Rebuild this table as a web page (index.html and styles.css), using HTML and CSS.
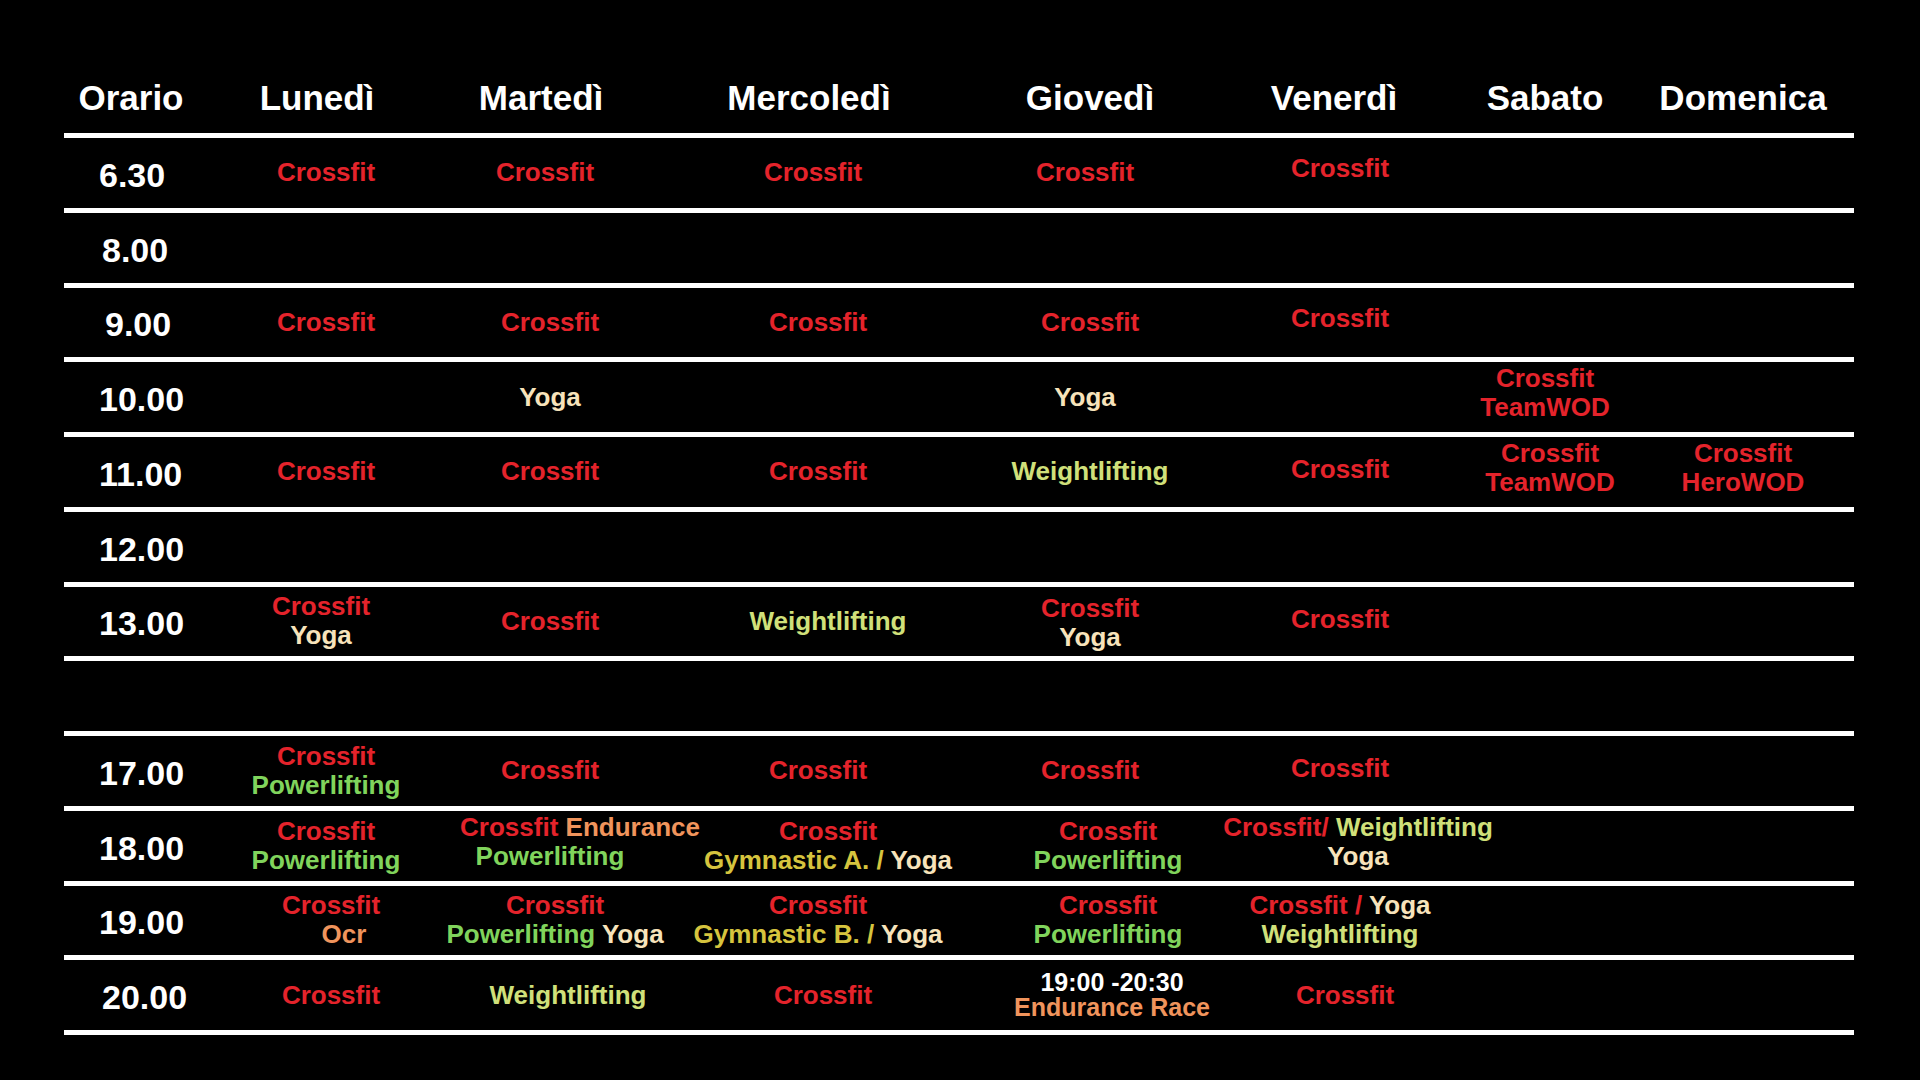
FILE: index.html
```html
<!DOCTYPE html>
<html lang="it">
<head>
<meta charset="utf-8">
<title>Orario</title>
<link rel="stylesheet" href="styles.css">
</head>
<body>
<div class="schedule">
  <div class="row head">
    <div class="cell h-time"><div class="ln">Orario</div></div>
    <div class="cell h-left"><div class="ln">Lunedì</div></div>
    <div class="cell h-left"><div class="ln">Martedì</div></div>
    <div class="cell h-left"><div class="ln">Mercoledì</div></div>
    <div class="cell"><div class="ln">Giovedì</div></div>
    <div class="cell h-left-s"><div class="ln">Venerdì</div></div>
    <div class="cell"><div class="ln">Sabato</div></div>
    <div class="cell"><div class="ln">Domenica</div></div>
  </div>

  <div class="row">
    <div class="cell time"><div class="ln">6.30</div></div>
    <div class="cell"><div class="ln cf">Crossfit</div></div>
    <div class="cell nudge-l"><div class="ln cf">Crossfit</div></div>
    <div class="cell nudge-l"><div class="ln cf">Crossfit</div></div>
    <div class="cell nudge-l"><div class="ln cf">Crossfit</div></div>
    <div class="cell hi"><div class="ln cf">Crossfit</div></div>
    <div class="cell"></div>
    <div class="cell"></div>
  </div>

  <div class="row">
    <div class="cell time t-in"><div class="ln">8.00</div></div>
    <div class="cell"></div><div class="cell"></div><div class="cell"></div>
    <div class="cell"></div><div class="cell"></div><div class="cell"></div><div class="cell"></div>
  </div>

  <div class="row">
    <div class="cell time t-in2"><div class="ln">9.00</div></div>
    <div class="cell"><div class="ln cf">Crossfit</div></div>
    <div class="cell"><div class="ln cf">Crossfit</div></div>
    <div class="cell"><div class="ln cf">Crossfit</div></div>
    <div class="cell"><div class="ln cf">Crossfit</div></div>
    <div class="cell hi"><div class="ln cf">Crossfit</div></div>
    <div class="cell"></div>
    <div class="cell"></div>
  </div>

  <div class="row">
    <div class="cell time"><div class="ln">10.00</div></div>
    <div class="cell"></div>
    <div class="cell"><div class="ln yo">Yoga</div></div>
    <div class="cell"></div>
    <div class="cell nudge-l"><div class="ln yo">Yoga</div></div>
    <div class="cell"></div>
    <div class="cell hi"><div class="ln cf">Crossfit</div><div class="ln cf">TeamWOD</div></div>
    <div class="cell"></div>
  </div>

  <div class="row">
    <div class="cell time"><div class="ln">11.00</div></div>
    <div class="cell"><div class="ln cf">Crossfit</div></div>
    <div class="cell"><div class="ln cf">Crossfit</div></div>
    <div class="cell"><div class="ln cf">Crossfit</div></div>
    <div class="cell"><div class="ln wl">Weightlifting</div></div>
    <div class="cell hi-s"><div class="ln cf">Crossfit</div></div>
    <div class="cell nudge-s hi"><div class="ln cf">Crossfit</div><div class="ln cf">TeamWOD</div></div>
    <div class="cell hi"><div class="ln cf">Crossfit</div><div class="ln cf">HeroWOD</div></div>
  </div>

  <div class="row">
    <div class="cell time"><div class="ln">12.00</div></div>
    <div class="cell"></div><div class="cell"></div><div class="cell"></div>
    <div class="cell"></div><div class="cell"></div><div class="cell"></div><div class="cell"></div>
  </div>

  <div class="row">
    <div class="cell time"><div class="ln">13.00</div></div>
    <div class="cell nudge-l"><div class="ln cf">Crossfit</div><div class="ln yo">Yoga</div></div>
    <div class="cell"><div class="ln cf">Crossfit</div></div>
    <div class="cell nudge-m"><div class="ln wl">Weightlifting</div></div>
    <div class="cell lo"><div class="ln cf">Crossfit</div><div class="ln yo">Yoga</div></div>
    <div class="cell hi-s"><div class="ln cf">Crossfit</div></div>
    <div class="cell"></div>
    <div class="cell"></div>
  </div>

  <div class="row gap">
    <div class="cell time"></div>
    <div class="cell"></div><div class="cell"></div><div class="cell"></div>
    <div class="cell"></div><div class="cell"></div><div class="cell"></div><div class="cell"></div>
  </div>

  <div class="row">
    <div class="cell time"><div class="ln">17.00</div></div>
    <div class="cell"><div class="ln cf">Crossfit</div><div class="ln pl">Powerlifting</div></div>
    <div class="cell"><div class="ln cf">Crossfit</div></div>
    <div class="cell"><div class="ln cf">Crossfit</div></div>
    <div class="cell"><div class="ln cf">Crossfit</div></div>
    <div class="cell hi-s"><div class="ln cf">Crossfit</div></div>
    <div class="cell"></div>
    <div class="cell"></div>
  </div>

  <div class="row">
    <div class="cell time"><div class="ln">18.00</div></div>
    <div class="cell"><div class="ln cf">Crossfit</div><div class="ln pl">Powerlifting</div></div>
    <div class="cell hi"><div class="ln shift-30"><span class="cf">Crossfit</span> <span class="en">Endurance</span></div><div class="ln pl">Powerlifting</div></div>
    <div class="cell nudge-m"><div class="ln cf">Crossfit</div><div class="ln"><span class="gy">Gymnastic A. /</span> <span class="yo">Yoga</span></div></div>
    <div class="cell nudge-x"><div class="ln cf">Crossfit</div><div class="ln pl">Powerlifting</div></div>
    <div class="cell nudge-x hi"><div class="ln"><span class="cf">Crossfit/</span> <span class="wl">Weightlifting</span></div><div class="ln yo">Yoga</div></div>
    <div class="cell"></div>
    <div class="cell"></div>
  </div>

  <div class="row">
    <div class="cell time"><div class="ln">19.00</div></div>
    <div class="cell nudge-s"><div class="ln cf">Crossfit</div><div class="ln en shift-20">Ocr</div></div>
    <div class="cell nudge-s"><div class="ln cf">Crossfit</div><div class="ln"><span class="pl">Powerlifting</span> <span class="yo">Yoga</span></div></div>
    <div class="cell"><div class="ln cf">Crossfit</div><div class="ln"><span class="gy">Gymnastic B. /</span> <span class="yo">Yoga</span></div></div>
    <div class="cell nudge-x"><div class="ln cf">Crossfit</div><div class="ln pl">Powerlifting</div></div>
    <div class="cell"><div class="ln"><span class="cf">Crossfit /</span> <span class="yo">Yoga</span></div><div class="ln wl">Weightlifting</div></div>
    <div class="cell"></div>
    <div class="cell"></div>
  </div>

  <div class="row">
    <div class="cell time t-in"><div class="ln">20.00</div></div>
    <div class="cell nudge-s"><div class="ln cf">Crossfit</div></div>
    <div class="cell nudge-x"><div class="ln wl">Weightlifting</div></div>
    <div class="cell nudge-s"><div class="ln cf">Crossfit</div></div>
    <div class="cell nudge-y tight"><div class="ln wh">19:00 -20:30</div><div class="ln en">Endurance Race</div></div>
    <div class="cell nudge-s"><div class="ln cf">Crossfit</div></div>
    <div class="cell"></div>
    <div class="cell"></div>
  </div>
</div>
</body>
</html>
```

FILE: styles.css
```css
* {
  box-sizing: border-box;
}

html, body {
  margin: 0;
  padding: 0;
  background: #000;
}

body {
  width: 1920px;
  height: 1080px;
  overflow: hidden;
  font-family: "Liberation Sans", Arial, Helvetica, sans-serif;
  font-weight: 700;
  color: #fff;
}

.schedule {
  margin: 64px 0 0 64px;
  width: 1790px;
  display: flex;
  flex-direction: column;
}

.row {
  display: grid;
  grid-template-columns: 142px 240px 208px 328px 216px 284px 126px 270px;
  height: 74.75px;
  border-bottom: 5px solid #fff;
}

.row.head {
  height: 74px;
  padding-bottom: 2px;
}

.cell {
  display: flex;
  flex-direction: column;
  align-items: center;
  justify-content: center;
  white-space: nowrap;
  font-size: 26px;
  line-height: 29px;
}

.ln {
  display: block;
}

.head .cell {
  font-size: 35px;
  line-height: 40px;
  color: #fff;
}

.head .h-time {
  padding-right: 8px;
}

.head .h-left {
  padding-right: 18px;
}

.head .h-left-s {
  padding-right: 12px;
}

.time {
  align-items: flex-start;
  font-size: 34px;
  line-height: 38px;
  color: #fff;
  padding-left: 35px;
  padding-top: 4px;
}

.time.t-in {
  padding-left: 38px;
}

.time.t-in2 {
  padding-left: 41px;
}

.cf { color: #e4232b; }
.yo { color: #f7e3bb; }
.wl { color: #d0e07a; }
.pl { color: #80d45c; }
.en { color: #f0945c; }
.gy { color: #d6c43e; }
.wh { color: #fff; }

.hi { padding-bottom: 8px; }
.hi-s { padding-bottom: 4px; }
.lo { padding-top: 4px; }

.nudge-l { padding-right: 10px; }
.nudge-s { padding-left: 10px; }
.nudge-m { padding-left: 20px; }
.nudge-x { padding-left: 36px; }
.nudge-y { padding-left: 44px; }

.shift-30 { margin-left: 60px; }
.shift-20 { margin-left: 26px; }

.tight {
  font-size: 25px;
  line-height: 25px;
}
```
